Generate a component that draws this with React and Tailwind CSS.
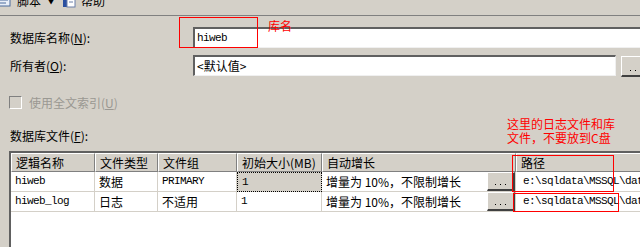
import React from 'react';

const cjk = { fontFamily: '"SimSun", "Noto Sans CJK SC", sans-serif' };
const mono = { fontFamily: '"Liberation Mono", "Noto Sans CJK SC", monospace', fontSize: '11px', letterSpacing: '-0.6px' };

const cols = 'grid grid-cols-[84px_63px_79px_85px_194px_200px]';

const rows = [
    { name: 'hiweb', type: '数据', group: 'PRIMARY', groupMono: true, size: '1', growth: '增量为 10%，不限制增长', path: 'e:\\sqldata\\MSSQL\\data\\hiweb.mdf', selected: true },
    { name: 'hiweb_log', type: '日志', group: '不适用', groupMono: false, size: '1', growth: '增量为 10%，不限制增长', path: 'e:\\sqldata\\MSSQL\\data\\hiweb_log.ldf' },
];

function HeaderCell({ children }) {
    return (
        <div className="h-[19px] bg-[#d4d0c8] border-t border-l border-t-white border-l-white border-r border-b border-r-[#808080] border-b-[#808080] px-[4px] text-[12px] leading-[17px] text-black whitespace-nowrap overflow-hidden">
            {children}
        </div>
    );
}

function Cell({ children, monoText, className = '' }) {
    return (
        <div
            className={`h-[20px] border-r border-b border-[#d4d0c8] px-[4px] text-[12px] leading-[19px] whitespace-nowrap overflow-hidden text-black ${className}`}
            style={monoText ? mono : undefined}
        >
            {children}
        </div>
    );
}

function DotsButton({ className = '' }) {
    return (
        <div className={`shrink-0 flex items-end justify-center gap-[4px] pb-[4px] bg-[#d4d0c8] border-t border-l border-t-white border-l-white border-b-2 border-r-2 border-b-[#404040] border-r-[#404040] ${className}`}>
            <span className="w-[1px] h-[1px] bg-black" />
            <span className="w-[1px] h-[1px] bg-black" />
            <span className="w-[1px] h-[1px] bg-black" />
        </div>
    );
}

export default function App() {
    return (
        <div className="relative w-[640px] h-[247px] overflow-hidden bg-[#d4d0c8] text-black" style={cjk}>
            {/* toolbar, cut at top */}
            <div className="h-[16px] border-b border-[#808080] overflow-hidden">
                <div className="flex items-center gap-[2px] -mt-[6px] text-[12px] leading-[14px]">
                    <svg width="16" height="14" viewBox="0 0 16 14" className="-ml-[3px]">
                        <rect x="1" y="2" width="12" height="10" fill="#e8eef8" stroke="#4a6b9c" />
                        <path d="M3 6h8M3 9h6" stroke="#4a6b9c" />
                    </svg>
                    <span className="ml-[2px]">脚本</span>
                    <span className="ml-[4px] text-[8px]">▼</span>
                    <svg width="16" height="14" viewBox="0 0 16 14" className="ml-[4px]">
                        <rect x="2" y="1" width="4" height="12" fill="#2a4fa0" />
                        <rect x="6" y="1" width="8" height="12" fill="#ffffff" stroke="#6b7fa8" />
                        <path d="M8 5h4M8 8h4" stroke="#6b7fa8" />
                    </svg>
                    <span className="ml-[2px]">帮助</span>
                </div>
            </div>

            {/* database name */}
            <div className="flex items-center mt-[11px] h-[21px]">
                <div className="w-[193px] shrink-0 pl-[10px] text-[12px]">数据库名称(<span className="underline">N</span>):</div>
                <div className="flex-1 h-[21px] bg-white border-t-2 border-l-2 border-t-[#606060] border-l-[#606060] border-b border-b-[#f0f0f0] pl-[2px] leading-[18px]" style={mono}>
                    hiweb
                </div>
            </div>

            {/* owner */}
            <div className="flex items-center mt-[7px] h-[21px]">
                <div className="w-[193px] shrink-0 pl-[10px] text-[12px]">所有者(<span className="underline">O</span>):</div>
                <div className="w-[423px] shrink-0 h-[21px] bg-white border-t-2 border-l-2 border-t-[#606060] border-l-[#606060] border-b border-r border-b-[#f0f0f0] border-r-[#f0f0f0] pl-[2px] text-[12px] leading-[17px]">
                    &lt;默认值&gt;
                </div>
                <DotsButton className="ml-[5px] w-[30px] h-[21px] mt-[2px]" />
            </div>

            {/* full text checkbox */}
            <div className="flex items-center mt-[20px] pl-[9px] h-[13px]">
                <div className="w-[13px] h-[13px] border border-t-[#808080] border-l-[#808080] border-b-white border-r-white bg-[#d4d0c8]" />
                <div className="ml-[7px] text-[12px] text-[#9a9892]">使用全文索引(<span className="underline">U</span>)</div>
            </div>

            {/* files label */}
            <div className="mt-[20px] pl-[10px] text-[12px] leading-[14px]">数据库文件(<span className="underline">F</span>):</div>

            {/* files grid */}
            <div className="mt-[8px] ml-[9px] h-[200px] bg-white border-l-2 border-t-2 border-l-[#606060] border-t-[#606060]">
                <div className={cols}>
                    <HeaderCell>逻辑名称</HeaderCell>
                    <HeaderCell>文件类型</HeaderCell>
                    <HeaderCell>文件组</HeaderCell>
                    <HeaderCell>初始大小(MB)</HeaderCell>
                    <HeaderCell>自动增长</HeaderCell>
                    <HeaderCell>路径</HeaderCell>
                </div>
                {rows.map((r) => (
                    <div key={r.name} className={cols}>
                        <Cell monoText>{r.name}</Cell>
                        <Cell>{r.type}</Cell>
                        <Cell monoText={r.groupMono}>{r.group}</Cell>
                        <Cell monoText className={r.selected ? 'bg-[#d4d0c8] border border-dotted border-black' : ''}>{r.size}</Cell>
                        <div className="h-[20px] border-r border-b border-[#d4d0c8] flex">
                            <div className="flex-1 pl-[4px] text-[12px] leading-[19px] whitespace-nowrap">{r.growth}</div>
                            <DotsButton className="w-[28px] h-[19px]" />
                        </div>
                        <Cell monoText className="pl-[7px]">{r.path}</Cell>
                    </div>
                ))}
            </div>

            {/* red annotations */}
            <div className="absolute left-[179px] top-[17px] w-[79px] h-[31px] border border-[#ff0000]" />
            <div className="absolute left-[268px] top-[18px] text-[12px] leading-[16px] text-[#ff0000]">库名</div>
            <div className="absolute left-[507px] top-[117px] text-[12px] leading-[14px] text-[#ff0000]">
                <div>这里的日志文件和库</div>
                <div>文件，不要放到C盘</div>
            </div>
            <div className="absolute left-[512px] top-[155px] w-[102px] h-[37px] border border-[#ff0000]" />
            <div className="absolute left-[513px] top-[193px] w-[106px] h-[19px] border border-[#ff0000]" />
        </div>
    );
}
